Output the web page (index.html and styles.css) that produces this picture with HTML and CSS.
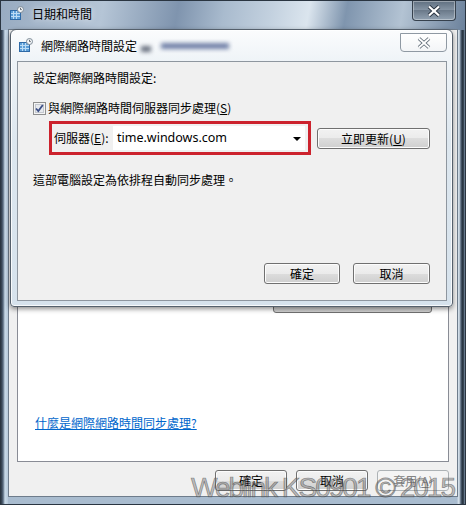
FILE: index.html
```html
<!DOCTYPE html>
<html lang="zh-Hant">
<head>
<meta charset="UTF-8">
<title>日期和時間</title>
<link rel="stylesheet" href="styles.css">
</head>
<body>

<div class="window">
  <div class="titlebar">
    <svg class="app-icon" width="14" height="14" viewBox="0 0 14 14">
      <rect x="0.5" y="4.5" width="10" height="9" fill="#5d9fd8" stroke="#2f6aa6"/>
      <path d="M3.5 5v8M6.5 5v8M1 7.5h9M1 10.5h9" stroke="#bcdcf5" stroke-width="1"/>
      <circle cx="10.5" cy="3.5" r="3" fill="#f4f6f8" stroke="#7d8a96"/>
      <path d="M10.5 1.8v1.8h1.3" stroke="#404850" stroke-width="0.8" fill="none"/>
    </svg>
    <span class="title">日期和時間</span>
    <div class="win-close">
      <svg width="14" height="12" viewBox="0 0 14 12">
        <path d="M2 1.5l5 4.5 5-4.5M2 10.5l5-4.5 5 4.5" stroke="#2a3440" stroke-width="4" fill="none"/>
        <path d="M2 1.5l5 4.5 5-4.5M2 10.5l5-4.5 5 4.5" stroke="#ffffff" stroke-width="2.2" fill="none"/>
      </svg>
    </div>
  </div>

  <div class="client">
    <div class="tabpanel">
      <div class="hidden-btn"></div>
      <a class="help-link" href="#">什麼是網際網路時間同步處理?</a>
    </div>
    <div class="button-row">
      <button class="btn wide">確定</button>
      <button class="btn wide">取消</button>
      <button class="btn wide disabled">套用(<u>A</u>)</button>
    </div>
  </div>

  <div class="dialog">
    <div class="dlg-title">
      <svg class="app-icon" width="14" height="14" viewBox="0 0 14 14">
        <rect x="0.5" y="4.5" width="10" height="9" fill="#5d9fd8" stroke="#2f6aa6"/>
        <path d="M3.5 5v8M6.5 5v8M1 7.5h9M1 10.5h9" stroke="#bcdcf5" stroke-width="1"/>
        <circle cx="10.5" cy="3.5" r="3" fill="#f4f6f8" stroke="#7d8a96"/>
        <path d="M10.5 1.8v1.8h1.3" stroke="#404850" stroke-width="0.8" fill="none"/>
      </svg>
      <span class="title">網際網路時間設定</span>
      <span class="blur-a"></span>
      <span class="blur-b"></span>
      <div class="dlg-close">
        <svg width="16" height="12" viewBox="0 0 16 12">
          <path d="M3 1.5l5 4.5 5-4.5M3 10.5l5-4.5 5 4.5" stroke="#5e6a75" stroke-width="3.6" fill="none"/>
          <path d="M3 1.5l5 4.5 5-4.5M3 10.5l5-4.5 5 4.5" stroke="#ffffff" stroke-width="1.8" fill="none"/>
        </svg>
      </div>
    </div>

    <div class="dlg-panel">
      <div class="heading">設定網際網路時間設定:</div>
      <label class="check-row">
        <svg class="checkbox" width="13" height="13" viewBox="0 0 13 13">
          <rect x="0.5" y="0.5" width="12" height="12" fill="#f4f4f4" stroke="#8e8f8f"/>
          <rect x="2.5" y="2.5" width="8" height="8" fill="#e6e9ee" stroke="#c4c8cf"/>
          <path d="M3 6.5l2.3 2.5 4.5-6" stroke="#3c4f86" stroke-width="1.8" fill="none"/>
        </svg>
        <span>與網際網路時間伺服器同步處理(<u>S</u>)</span>
      </label>
      <div class="server-row">
        <div class="highlight">
          <span class="server-label">伺服器(<u>E</u>):</span>
          <div class="combo">
            <span class="combo-text">time.windows.com</span>
            <span class="combo-arrow"></span>
          </div>
        </div>
        <button class="btn update">立即更新(<u>U</u>)</button>
      </div>
      <div class="status">這部電腦設定為依排程自動同步處理。</div>
      <div class="dlg-buttons">
        <button class="btn ok">確定</button>
        <button class="btn cancel">取消</button>
      </div>
    </div>
  </div>

  <div class="watermark">Weblink KS0901 © 2015</div>
</div>

</body>
</html>
```

FILE: styles.css
```css
/* Windows 7 date and time dialog */
body {
  margin: 0;
  padding: 0;
  font-family: "Noto Sans CJK TC", "Noto Sans", sans-serif;
  font-size: 12px;
  color: #000;
}
.window {
  position: relative;
  width: 466px;
  height: 505px;
  box-sizing: border-box;
  border: 1px solid #2a3541;
  overflow: hidden;
  background:
    linear-gradient(100deg, #98abc1 0%, #b5c5d6 22%, #7f94ae 38%, #a9bbce 48%, #c3d1df 58%, #dbe5ee 66%, #7f95ae 74%, #b3c3d3 86%, #6c829c 100%) top / 100% 29px no-repeat,
    linear-gradient(90deg, #2c3744 0px, #56687c 2px, #c9dae8 4px, #b7c9da 7px, transparent 7px) left / 8px 100% no-repeat,
    linear-gradient(90deg, #aebfd0 0px, #dce7f0 2px, #4c5d70 4px, #1f2a35 6px, #7d92a8 8px) right / 8px 100% no-repeat,
    #a9bccf;
}
.titlebar {
  height: 28px;
  display: flex;
  align-items: center;
  padding-left: 9px;
}
.titlebar .app-icon {
  margin-top: -4px;
}
.titlebar .title {
  margin-left: 8px;
  margin-top: -4px;
  color: #000;
  text-shadow: 0 0 6px rgba(255, 255, 255, 0.9);
}
.win-close {
  margin-left: auto;
  margin-right: 9px;
  align-self: flex-start;
  width: 44px;
  height: 20px;
  box-sizing: border-box;
  border: 1px solid #36414d;
  border-top: none;
  border-radius: 0 0 4px 4px;
  background: linear-gradient(#5f6f80, #8796a6 50%, #6b7a8a 50%, #92a2b2);
  box-shadow: inset 0 0 0 1px rgba(255, 255, 255, 0.35);
  display: flex;
  justify-content: center;
  align-items: center;
}
.client {
  width: 450px;
  height: 468px;
  margin-left: 7px;
  box-sizing: border-box;
  border: 1px solid #6e7c8b;
  background-color: #f0f0f0;
  padding: 20px 8px 5px 8px;
  display: flex;
  flex-direction: column;
}
.tabpanel {
  height: 412px;
  box-sizing: border-box;
  border: 1px solid #898c95;
  background-color: #fff;
  display: flex;
  flex-direction: column;
}
.hidden-btn {
  margin-top: 240px;
  margin-left: 255px;
  width: 159px;
  height: 22px;
  box-sizing: border-box;
  border: 1px solid #707070;
  border-radius: 3px;
  background: linear-gradient(#f2f2f2, #ebebeb 50%, #dddddd 50%, #cfcfcf);
}
.help-link {
  margin-top: 102px;
  margin-left: 17px;
  align-self: flex-start;
  color: #0066cc;
  text-decoration: underline;
  line-height: 16px;
}
.button-row {
  display: flex;
  justify-content: flex-end;
  gap: 9px;
  margin-top: 8px;
}
.btn {
  height: 21px;
  box-sizing: border-box;
  padding: 0;
  border: 1px solid #707070;
  border-radius: 3px;
  background: linear-gradient(#f2f2f2, #ebebeb 50%, #dddddd 50%, #cfcfcf);
  box-shadow: inset 0 0 0 1px #fcfcfc;
  font-family: "Noto Sans CJK TC", "Noto Sans", sans-serif;
  font-size: 12px;
  color: #000;
  line-height: 17px;
}
.btn.wide {
  width: 72px;
}
.btn.disabled {
  border-color: #adb2b5;
  background: #f4f4f4;
  box-shadow: none;
  color: #838383;
}
.dialog {
  position: absolute;
  left: 9px;
  top: 28px;
  width: 443px;
  height: 278px;
  box-sizing: border-box;
  border: 1px solid #55606c;
  border-radius: 6px 6px 4px 4px;
  background: linear-gradient(#fbfcfd, #eef3f7 12%, #dde7ef 40%, #d6e2ec);
  box-shadow: 0 2px 5px rgba(0, 0, 0, 0.45), inset 0 0 0 1px rgba(255, 255, 255, 0.8);
  padding: 0 5px 5px 6px;
  display: flex;
  flex-direction: column;
}
.dlg-title {
  height: 31px;
  display: flex;
  align-items: center;
  padding-left: 2px;
}
.dlg-title .app-icon {
  margin-top: -2px;
}
.dlg-title .title {
  margin-left: 8px;
  margin-top: -1px;
  color: #000;
}
.blur-a {
  width: 10px;
  height: 6px;
  margin-left: 4px;
  margin-top: 6px;
  background-color: rgba(50, 60, 80, 0.7);
  filter: blur(2px);
}
.blur-b {
  width: 68px;
  height: 6px;
  margin-left: 10px;
  background-color: rgba(70, 90, 140, 0.75);
  filter: blur(2px);
}
.dlg-close {
  margin-left: auto;
  margin-right: 0;
  align-self: flex-start;
  margin-top: 3px;
  width: 47px;
  height: 19px;
  box-sizing: border-box;
  border: 1px solid #8f99a3;
  border-radius: 0 0 4px 4px;
  background: linear-gradient(#ffffff, #f3f5f7);
  display: flex;
  justify-content: center;
  align-items: center;
}
.dlg-panel {
  flex: 1;
  box-sizing: border-box;
  border: 1px solid #8e969f;
  background-color: #f0f0f0;
  padding: 8px 15px 16px 15px;
  display: flex;
  flex-direction: column;
  line-height: 16px;
}
.check-row {
  display: flex;
  align-items: center;
  gap: 2px;
  margin-top: 14px;
}
.checkbox {
  flex: none;
}
.server-row {
  display: flex;
  align-items: center;
  gap: 6px;
  margin-top: 5px;
  margin-left: 16px;
}
.highlight {
  width: 262px;
  height: 34px;
  box-sizing: border-box;
  border: 3px solid #cc222d;
  padding: 2px 3px 2px 2px;
  display: flex;
  align-items: center;
}
.server-label {
  width: 59px;
  flex: none;
}
.combo {
  flex: 1;
  height: 24px;
  background-color: #fff;
  display: flex;
  align-items: center;
  padding: 0 4px;
}
.combo-text {
  font-family: "Noto Sans", sans-serif;
  font-size: 12.5px;
}
.combo-arrow {
  margin-left: auto;
  margin-right: 0;
  width: 0;
  height: 0;
  border-left: 4px solid transparent;
  border-right: 4px solid transparent;
  border-top: 4px solid #000;
  margin-top: 2px;
}
.btn.update {
  width: 113px;
}
.status {
  margin-top: 17px;
}
.dlg-buttons {
  margin-top: auto;
  display: flex;
  justify-content: flex-end;
  gap: 13px;
  padding-right: 1px;
}
.btn.ok {
  width: 76px;
}
.btn.cancel {
  width: 77px;
}
.watermark {
  position: absolute;
  left: 190px;
  top: 471px;
  font-family: "Liberation Sans", Arial, sans-serif;
  font-size: 28px;
  letter-spacing: -2px;
  color: rgba(120, 120, 120, 0.45);
  -webkit-text-stroke: 0.7px rgba(70, 70, 70, 0.6);
  white-space: nowrap;
}
```
